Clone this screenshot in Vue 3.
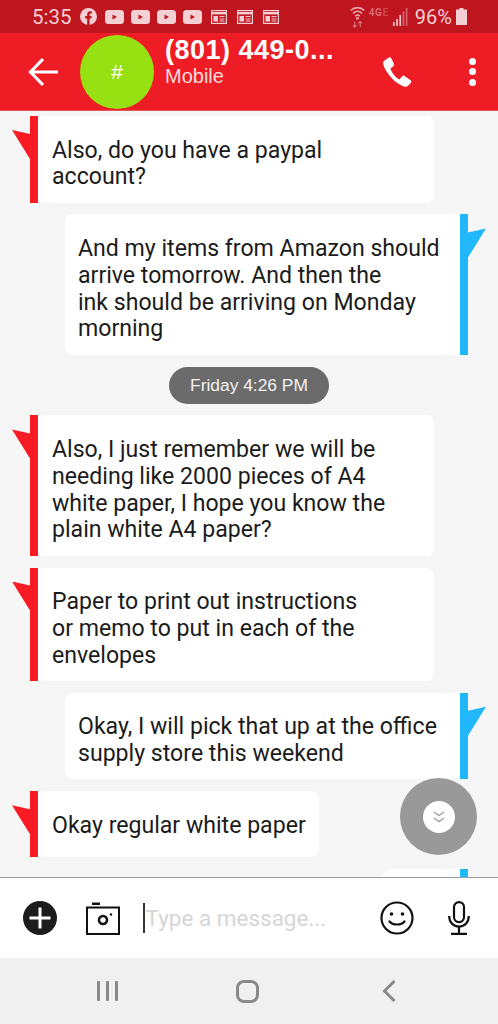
<script setup>
const messages = [
  { id: 1, side: 'in', text: 'Also, do you have a paypal\naccount?' },
  { id: 2, side: 'out', text: 'And my items from Amazon should\narrive tomorrow. And then the\nink should be arriving on Monday\nmorning' },
  { id: 3, pill: 'Friday 4:26 PM' },
  { id: 4, side: 'in', text: 'Also, I just remember we will be\nneeding like 2000 pieces of A4\nwhite paper, I hope you know the\nplain white A4 paper?' },
  { id: 5, side: 'in', text: 'Paper to print out instructions\nor memo to put in each of the\nenvelopes' },
  { id: 6, side: 'out', text: 'Okay, I will pick that up at the office\nsupply store this weekend' },
  { id: 7, side: 'in', text: 'Okay regular white paper', short: true },
  { id: 8, side: 'out', text: '', tiny: true }
]
</script>

<template>
  <div class="phone">
    <div class="status">
      <span class="time">5:35</span>
      <svg class="fb" viewBox="0 0 17 17" width="17" height="17">
        <circle cx="8.5" cy="8.5" r="8.5" fill="#f3d0d3" />
        <path d="M7.2 17V10.6H5.2V8.1H7.2V6.3C7.2 4.2 8.4 3.2 10.2 3.2C11 3.2 11.8 3.3 11.8 3.3V5.4H10.8C9.8 5.4 9.6 6 9.6 6.6V8.1H11.7L11.3 10.6H9.6V17Z" fill="#c0151f" />
      </svg>
      <div class="yts">
        <svg v-for="n in 4" :key="n" viewBox="0 0 19 14" width="19" height="14">
          <rect width="19" height="14" rx="3.5" fill="#f3d0d3" />
          <path d="M7.5 4.5L12 7L7.5 9.5Z" fill="#c0151f" />
        </svg>
      </div>
      <div class="news">
        <svg v-for="n in 3" :key="n" viewBox="0 0 16 14" width="16" height="14" fill="none" stroke="#f3d0d3">
          <rect x="0.6" y="0.6" width="14.8" height="12.8" stroke-width="1.2" />
          <path d="M0.6 3.2H15.4" stroke-width="2.4" />
          <rect x="2.5" y="6" width="4.5" height="5.5" fill="#f3d0d3" stroke="none" />
          <path d="M8.5 6.6H13.5M8.5 9H13.5M8.5 11H13.5" stroke-width="1" />
        </svg>
      </div>
      <div class="status-right">
        <svg viewBox="0 0 18 26" width="17" height="24" fill="none" stroke="#e8a3a8">
          <path d="M1.5 6C6 1.8 12 1.8 16.5 6M4 9C7 6.4 11 6.4 14 9M6.5 12C8 10.8 10 10.8 11.5 12" stroke-width="1.7" />
          <circle cx="9" cy="14.5" r="1.5" fill="#e8a3a8" stroke="none" />
          <path d="M6 18V24M4 22L6 24L8 22M12 24V18M10 20L12 18L14 20" stroke="#d9797f" stroke-width="1.2" />
        </svg>
        <span class="net">4G<i>E</i></span>
        <svg class="signal" viewBox="0 0 15 18" width="15" height="18">
          <rect x="0" y="14" width="1.6" height="4" fill="#f3d0d3" />
          <rect x="3.2" y="11" width="1.6" height="7" fill="#f3d0d3" />
          <rect x="6.4" y="7" width="1.6" height="11" fill="#f3d0d3" />
          <rect x="9.6" y="3.5" width="1.6" height="14.5" fill="#d9696f" />
          <rect x="12.8" y="0" width="1.6" height="18" fill="#d9696f" />
        </svg>
        <span class="pct">96%</span>
        <svg viewBox="0 0 11 17" width="11" height="17">
          <path d="M3.5 0H7.5V1.5H11V17H0V1.5H3.5Z" fill="#f3d0d3" />
        </svg>
      </div>
    </div>

    <header class="bar">
      <svg class="back" viewBox="0 0 30 30" width="30" height="30" fill="none" stroke="#fff" stroke-width="3.2">
        <path d="M30 15H3M15 2L2.5 15L15 28" />
      </svg>
      <div class="avatar">#</div>
      <div class="who">
        <div class="num">(801) 449-0...</div>
        <div class="kind">Mobile</div>
      </div>
      <svg class="call" viewBox="0 0 29 30" width="29" height="30">
        <path d="M1.5 3.6L6 0.6C6.8 0.1 7.7 0.3 8.1 1.1L11 7C11.4 7.8 11.2 8.6 10.6 9.1L7.4 11.6C8.6 15.8 12.4 20.6 16.4 22.6L19.2 19.2C19.8 18.5 20.8 18.4 21.5 18.9L27.6 23.2C28.4 23.8 28.5 24.8 28 25.5L25.4 28.4C24 29.8 21.8 30 19.6 29C10.8 25.2 3 15.8 0.4 8C-0.2 6 0.2 4.5 1.5 3.6Z" fill="#fff" />
      </svg>
      <div class="dots"><i></i><i></i><i></i></div>
    </header>

    <main class="thread">
      <template v-for="m in messages" :key="m.id">
        <div v-if="m.pill" class="pill">{{ m.pill }}</div>
        <div v-else class="msg" :class="[m.side, { short: m.short, tiny: m.tiny }]">
          <div class="bubble">{{ m.text }}</div>
        </div>
      </template>
      <div class="fab">
        <div class="fab-in">
          <svg viewBox="0 0 14 14" width="14" height="14" fill="none" stroke="#a3a3a3" stroke-width="1.5">
            <path d="M2 2L7 5.5L12 2M2 8L7 11.5L12 8" />
          </svg>
        </div>
      </div>
    </main>

    <div class="composer">
      <svg class="plus" viewBox="0 0 34 34" width="34" height="34">
        <circle cx="17" cy="17" r="17" fill="#1c1c1c" />
        <path d="M17 6.5V27.5M6.5 17H27.5" stroke="#fff" stroke-width="3" />
      </svg>
      <svg class="cam" viewBox="0 0 34 33" width="34" height="33" fill="none" stroke="#111">
        <rect x="6" y="0.5" width="8" height="2.5" fill="#111" stroke="none" />
        <rect x="1" y="5.5" width="32" height="26.5" stroke-width="2" />
        <circle cx="17" cy="18" r="4" stroke-width="2.6" />
        <circle cx="25" cy="12.5" r="1.2" fill="#111" stroke="none" />
      </svg>
      <div class="input">
        <span class="caret"></span>
        <span class="hint">Type a message...</span>
      </div>
      <svg class="smile" viewBox="0 0 34 34" width="34" height="34" fill="none" stroke="#111" stroke-width="2.2">
        <circle cx="17" cy="17" r="15.5" />
        <circle cx="11.5" cy="13" r="1.8" fill="#111" stroke="none" />
        <circle cx="22.5" cy="13" r="1.8" fill="#111" stroke="none" />
        <path d="M9.5 20.5C12.5 24.5 21.5 24.5 24.5 20.5" stroke-linecap="round" />
      </svg>
      <svg class="mic" viewBox="0 0 22 34" width="22" height="34" fill="none" stroke="#111" stroke-width="2.2">
        <rect x="6" y="1.1" width="10" height="20" rx="5" />
        <path d="M1.2 15C1.2 21 5 25.5 11 25.5C17 25.5 20.8 21 20.8 15M11 25.5V32.5M3 32.8H19" />
      </svg>
    </div>

    <nav class="softkeys">
      <svg viewBox="0 0 21 21" width="21" height="21" fill="#8a8a8a">
        <rect x="0" y="0" width="3" height="20" rx="1" />
        <rect x="9" y="0" width="3" height="20" rx="1" />
        <rect x="18" y="0" width="3" height="20" rx="1" />
      </svg>
      <svg viewBox="0 0 23 23" width="23" height="23" fill="none" stroke="#8a8a8a" stroke-width="3">
        <rect x="1.5" y="1.5" width="20" height="20" rx="6.5" />
      </svg>
      <svg viewBox="0 0 14 22" width="14" height="22" fill="none" stroke="#8a8a8a" stroke-width="3">
        <path d="M12.5 1L2.5 11L12.5 21" />
      </svg>
    </nav>
  </div>
</template>

<style>
body {
  margin: 0;
  background: #f6f6f6;
}
</style>

<style scoped>
.phone {
  width: 498px;
  height: 1024px;
  display: flex;
  flex-direction: column;
  overflow: hidden;
  font-family: Roboto, "Liberation Sans", sans-serif;
  background: #f6f6f6;
}

.status {
  height: 33px;
  flex: none;
  background: #bf151f;
  color: #f3d0d3;
  display: flex;
  align-items: center;
  padding: 0 31px 0 32px;
  box-sizing: border-box;
}

.time {
  font-size: 20.5px;
  width: 48px;
}

.yts {
  display: flex;
  gap: 7px;
  margin-left: 8px;
}

.news {
  display: flex;
  gap: 10px;
  margin-left: 9px;
}

.status-right {
  margin-left: auto;
  display: flex;
  align-items: center;
}

.net {
  font-size: 10px;
  font-weight: 700;
  color: #d9696f;
  margin: -8px 0 0 3px;
  width: 24px;
  letter-spacing: 0.5px;
}

.net i {
  font-style: normal;
  opacity: 0.6;
}

.pct {
  font-size: 20px;
  margin: 0 4px 0 7px;
}

.bar {
  height: 78px;
  flex: none;
  background: #ee1c25;
  border-bottom: 1px solid #e8555b;
  box-sizing: border-box;
  display: flex;
  align-items: center;
  padding-left: 28px;
  color: #fff;
  font-family: "Liberation Sans", Arial, sans-serif;
}

.avatar {
  width: 74px;
  height: 74px;
  border-radius: 50%;
  background: #97e012;
  margin-left: 22px;
  display: flex;
  align-items: center;
  justify-content: center;
  font-size: 21px;
  flex: none;
}

.who {
  margin-left: 11px;
  width: 218px;
  align-self: flex-start;
  margin-top: 4px;
}

.num {
  font-size: 27px;
  font-weight: 700;
  line-height: 27px;
  letter-spacing: 0.5px;
  white-space: nowrap;
}

.kind {
  font-size: 20px;
  line-height: 22px;
  margin-top: 1px;
  color: #fbdcdd;
}

.call {
  flex: none;
}

.dots {
  margin-left: 57px;
  display: flex;
  flex-direction: column;
  gap: 3.5px;
}

.dots i {
  width: 7px;
  height: 7px;
  border-radius: 50%;
  background: #fff;
}

.thread {
  flex: 1;
  min-height: 0;
  position: relative;
  overflow: hidden;
  display: flex;
  flex-direction: column;
  gap: 11.9px;
  padding-top: 5px;
  font-size: 23.1px;
  line-height: 26.8px;
  color: #1b1b1b;
}

.msg {
  position: relative;
  display: flex;
  flex: none;
}

.msg::before {
  content: "";
  position: absolute;
  top: 14px;
  width: 18px;
  height: 29px;
}

.bubble {
  flex: none;
  width: 396px;
  min-height: 66px;
  box-sizing: border-box;
  background: #fff;
  padding: 21.5px 14px 11.5px;
  white-space: pre;
}

.msg.in {
  margin-left: 30px;
  border-left: 8px solid #fa1c24;
}

.msg.in::before {
  left: -26px;
  background: #fa1c24;
  clip-path: polygon(0 0, 100% 14%, 100% 100%);
}

.msg.in .bubble {
  border-radius: 0 8px 8px 0;
}

.msg.out {
  margin-left: 65px;
  width: 403px;
  box-sizing: border-box;
  border-right: 8px solid #20b8fb;
}

.msg.out::before {
  right: -26px;
  background: #20b8fb;
  clip-path: polygon(100% 0, 0 14%, 0 100%);
}

.msg.out .bubble {
  width: 395px;
  border-radius: 8px 0 0 8px;
  padding-left: 13px;
}

.msg.short .bubble {
  width: 281px;
}

.msg.tiny {
  margin-left: 380px;
  width: 88px;
}

.msg.tiny .bubble {
  width: 80px;
  border-radius: 14px 0 0 0;
}

.pill {
  align-self: center;
  flex: none;
  height: 37px;
  line-height: 37px;
  padding: 0 21px;
  border-radius: 19px;
  background: #6b6b6b;
  color: #f2f2f2;
  font-size: 17.4px;
  font-family: "Liberation Sans", Arial, sans-serif;
}

.fab {
  position: absolute;
  left: 400px;
  top: 667px;
  width: 77px;
  height: 77px;
  border-radius: 50%;
  background: #999;
  display: flex;
  align-items: center;
  justify-content: center;
}

.fab-in {
  width: 32px;
  height: 32px;
  border-radius: 50%;
  background: #fff;
  display: flex;
  align-items: center;
  justify-content: center;
}

.composer {
  height: 81px;
  flex: none;
  box-sizing: border-box;
  background: #fff;
  border-top: 1px solid #9a9a9a;
  display: flex;
  align-items: center;
  padding-left: 23px;
  position: relative;
  z-index: 1;
}

.cam {
  margin-left: 29px;
}

.input {
  margin-left: 23px;
  width: 237px;
  display: flex;
  align-items: center;
}

.caret {
  width: 1.5px;
  height: 30px;
  background: #333;
  flex: none;
}

.hint {
  margin-left: 1px;
  color: #d6d6d6;
  font-size: 22.5px;
  white-space: nowrap;
}

.smile {
  flex: none;
}

.mic {
  margin-left: 34px;
  flex: none;
}

.softkeys {
  height: 66px;
  flex: none;
  background: #f0f0f0;
  position: relative;
  z-index: 1;
  display: flex;
  align-items: center;
  padding-left: 97px;
  gap: 118px;
}

.softkeys svg:last-child {
  margin-left: 5px;
}
</style>
